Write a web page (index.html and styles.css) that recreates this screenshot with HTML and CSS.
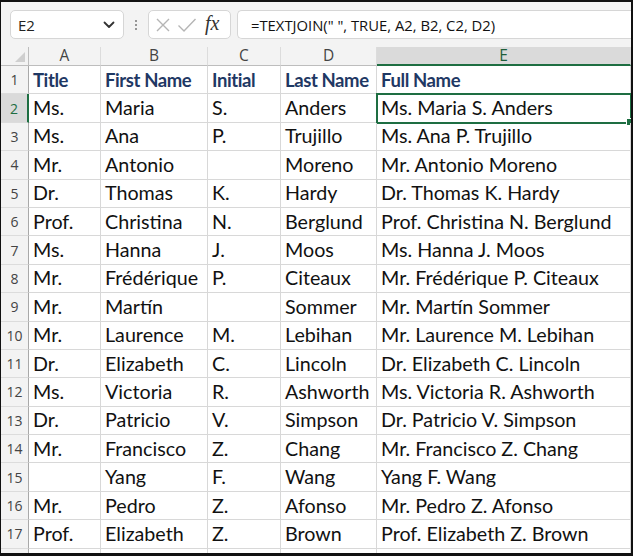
FILE: index.html
```html
<!DOCTYPE html>
<html>
<head>
<meta charset="utf-8">
<link rel="stylesheet" href="styles.css">
</head>
<body>
<div class="frame">
  <div class="fbar">
    <div class="namebox">
      <span class="ref">E2</span>
      <svg class="chev" width="12" height="8" viewBox="0 0 12 8"><path d="M1.5 1.5 L6 6 L10.5 1.5" fill="none" stroke="#333" stroke-width="1.8" stroke-linecap="round" stroke-linejoin="round"/></svg>
    </div>
    <div class="grip"><i></i><i></i><i></i></div>
    <div class="btnbox">
      <svg width="16" height="16" viewBox="0 0 16 16"><path d="M2 2 L14 14 M14 2 L2 14" stroke="#b5b5b5" stroke-width="1.4" fill="none"/></svg>
      <svg width="20" height="16" viewBox="0 0 20 16"><path d="M1.5 8.5 L7 14 L18.5 2" stroke="#b5b5b5" stroke-width="1.4" fill="none"/></svg>
      <span class="fx">fx</span>
    </div>
    <div class="formula">=TEXTJOIN(" ", TRUE, A2, B2, C2, D2)</div>
  </div>
  <div class="sheet">
    <div class="corner"><span class="tri"></span></div>
    <div class="ch">A</div><div class="ch">B</div><div class="ch">C</div><div class="ch">D</div><div class="ch sel">E</div>

    <div class="rh">1</div><div class="c hd">Title</div><div class="c hd">First Name</div><div class="c hd">Initial</div><div class="c hd">Last Name</div><div class="c hd">Full Name</div>
    <div class="rh sel">2</div><div class="c">Ms.</div><div class="c">Maria</div><div class="c">S.</div><div class="c">Anders</div><div class="c active">Ms. Maria S. Anders<span class="handle"></span></div>
    <div class="rh">3</div><div class="c">Ms.</div><div class="c">Ana</div><div class="c">P.</div><div class="c">Trujillo</div><div class="c">Ms. Ana P. Trujillo</div>
    <div class="rh">4</div><div class="c">Mr.</div><div class="c">Antonio</div><div class="c"></div><div class="c">Moreno</div><div class="c">Mr. Antonio Moreno</div>
    <div class="rh">5</div><div class="c">Dr.</div><div class="c">Thomas</div><div class="c">K.</div><div class="c">Hardy</div><div class="c">Dr. Thomas K. Hardy</div>
    <div class="rh">6</div><div class="c">Prof.</div><div class="c">Christina</div><div class="c">N.</div><div class="c">Berglund</div><div class="c">Prof. Christina N. Berglund</div>
    <div class="rh">7</div><div class="c">Ms.</div><div class="c">Hanna</div><div class="c">J.</div><div class="c">Moos</div><div class="c">Ms. Hanna J. Moos</div>
    <div class="rh">8</div><div class="c">Mr.</div><div class="c">Frédérique</div><div class="c">P.</div><div class="c">Citeaux</div><div class="c">Mr. Frédérique P. Citeaux</div>
    <div class="rh">9</div><div class="c">Mr.</div><div class="c">Martín</div><div class="c"></div><div class="c">Sommer</div><div class="c">Mr. Martín Sommer</div>
    <div class="rh">10</div><div class="c">Mr.</div><div class="c">Laurence</div><div class="c">M.</div><div class="c">Lebihan</div><div class="c">Mr. Laurence M. Lebihan</div>
    <div class="rh">11</div><div class="c">Dr.</div><div class="c">Elizabeth</div><div class="c">C.</div><div class="c">Lincoln</div><div class="c">Dr. Elizabeth C. Lincoln</div>
    <div class="rh">12</div><div class="c">Ms.</div><div class="c">Victoria</div><div class="c">R.</div><div class="c">Ashworth</div><div class="c">Ms. Victoria R. Ashworth</div>
    <div class="rh">13</div><div class="c">Dr.</div><div class="c">Patricio</div><div class="c">V.</div><div class="c">Simpson</div><div class="c">Dr. Patricio V. Simpson</div>
    <div class="rh">14</div><div class="c">Mr.</div><div class="c">Francisco</div><div class="c">Z.</div><div class="c">Chang</div><div class="c">Mr. Francisco Z. Chang</div>
    <div class="rh">15</div><div class="c"></div><div class="c">Yang</div><div class="c">F.</div><div class="c">Wang</div><div class="c">Yang F. Wang</div>
    <div class="rh">16</div><div class="c">Mr.</div><div class="c">Pedro</div><div class="c">Z.</div><div class="c">Afonso</div><div class="c">Mr. Pedro Z. Afonso</div>
    <div class="rh">17</div><div class="c">Prof.</div><div class="c">Elizabeth</div><div class="c">Z.</div><div class="c">Brown</div><div class="c">Prof. Elizabeth Z. Brown</div>
    <div class="rh"></div><div class="c"></div><div class="c"></div><div class="c"></div><div class="c"></div><div class="c"></div>
  </div>
</div>
</body>
</html>
```
FILE: styles.css
```css
html, body { margin: 0; padding: 0; background: #000; }
.frame {
  width: 630px; height: 551px;
  border-style: solid; border-color: #111;
  border-width: 2px 2px 3px 1px;
  background: #fff;
  overflow: hidden;
  display: flex; flex-direction: column;
}
.fbar {
  height: 45px; flex: none;
  background: #f3f3f3;
  display: flex; align-items: flex-start;
  padding: 8px 0 0 9px; box-sizing: border-box;
}
.namebox {
  width: 114px; height: 29px; box-sizing: border-box;
  background: #fff; border: 1px solid #d6d6d6; border-radius: 5px;
  display: flex; align-items: center; justify-content: space-between;
  padding: 0 8px 0 7px;
  font-family: "Open Sans", sans-serif; font-size: 15px; color: #222;
}
.grip { width: 24px; height: 29px; display: flex; flex-direction: column; align-items: center; justify-content: center; gap: 2px; }
.grip i { width: 2px; height: 2px; background: #777; border-radius: 50%; display: block; }
.btnbox {
  width: 83px; height: 29px; box-sizing: border-box;
  background: #fff; border: 1px solid #d6d6d6; border-radius: 5px;
  display: flex; align-items: center; gap: 6px; padding: 0 0 0 6px;
}
.fx { font-family: "Liberation Serif", serif; font-style: italic; font-size: 20px; color: #333; margin-left: 2px; line-height: 1; padding-bottom: 3px; }
.formula {
  flex: 1; height: 29px; box-sizing: border-box; margin-left: 6px;
  background: #fff; border: 1px solid #d6d6d6; border-right: none; border-radius: 5px 0 0 5px;
  padding: 4px 0 0 13px;
  font-family: "Open Sans", sans-serif; font-size: 14.8px; color: #111;
  white-space: nowrap;
}
.sheet {
  flex: 1;
  display: grid;
  grid-template-columns: 28px 72px 107px 73px 96px 1fr;
  grid-template-rows: 19px repeat(17, 28.4px) 1fr;
  font-family: Lato, sans-serif; font-size: 19.7px; color: #111;
}
.corner { background: #f3f3f3; border-right: 1px solid #bdbdbd; border-bottom: 1px solid #bdbdbd; position: relative; }
.tri { position: absolute; right: 3px; bottom: 3px; width: 0; height: 0; border-left: 10px solid transparent; border-bottom: 10px solid #cfcfcf; }
.ch {
  background: #f3f3f3; border-right: 1px solid #dcdcdc; border-bottom: 1px solid #bdbdbd;
  font-family: "Open Sans", sans-serif; font-size: 15.5px; color: #444;
  display: flex; align-items: center; justify-content: center; line-height: 1;
}
.ch.sel { background: #dadada; border-bottom: 2px solid #1e6e42; color: #1e5e3a; }
.rh {
  background: #f3f3f3; border-right: 1px solid #a9a9a9; border-bottom: 1px solid #dcdcdc;
  font-family: "Open Sans", sans-serif; font-size: 14px; color: #444;
  display: flex; align-items: center; justify-content: center;
}
.rh.sel { background: #dadada; color: #1e6e42; border-right: 2px solid #1e6e42; }
.c {
  border-right: 1px solid #d8d8d8; border-bottom: 1px solid #d8d8d8;
  padding: 0 0 4px 4px; box-sizing: border-box;
  display: flex; align-items: flex-end; white-space: nowrap; line-height: 1;
  position: relative;
}
.hd { font-weight: bold; color: #1f3864; font-size: 18.5px; letter-spacing: -0.4px; }
.active { outline: 2px solid #1e6e42; outline-offset: -1px; }
.handle { position: absolute; right: -4px; bottom: -4px; width: 6px; height: 6px; background: #1e6e42; border: 1px solid #fff; }
```
